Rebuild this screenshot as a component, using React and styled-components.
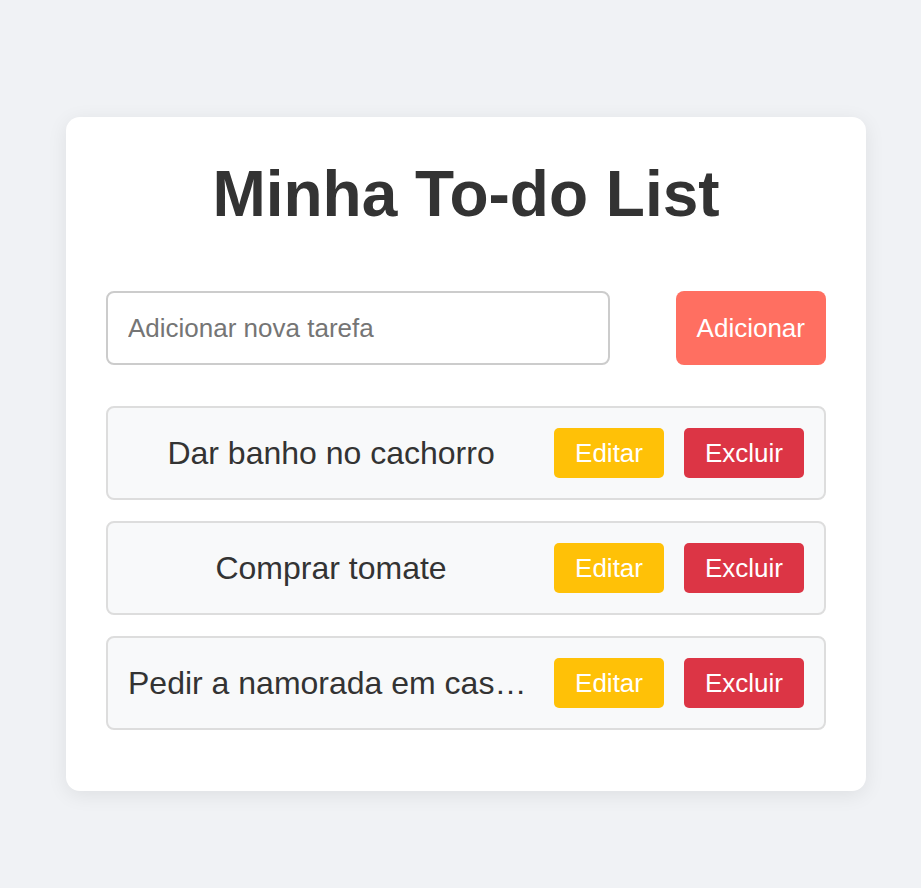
import styled, { createGlobalStyle } from "styled-components"
import { useState } from "react"

const GlobalStyle = createGlobalStyle`
    html, body {
        margin: 0;
        padding: 0;
        background: #f0f2f5;
        font-family: "Liberation Sans", Arial, sans-serif;
    }
`

const initialTasks = [
    "Dar banho no cachorro",
    "Comprar tomate",
    "Pedir a namorada em casamento",
]

const App = () => {

    const [tasks, setTasks] = useState(initialTasks)
    const [text, setText] = useState("")

    const addTask = (e) => {
        e.preventDefault()
        if (!text.trim()) return
        setTasks([...tasks, text.trim()])
        setText("")
    }

    return (
        <Page>
            <GlobalStyle />
            <Card>
                <Title>Minha To-do List</Title>

                <Form onSubmit={ addTask }>
                    <Input
                        placeholder="Adicionar nova tarefa"
                        value={ text }
                        onChange={ (e) => setText(e.target.value) }
                    />
                    <AddButton type="submit">Adicionar</AddButton>
                </Form>

                <TaskList>
                    { tasks.map((task, i) => (
                        <TaskItem key={ i }>
                            <TaskText>{ task }</TaskText>
                            <ActionButton $variant="edit">Editar</ActionButton>
                            <ActionButton $variant="delete" onClick={ () => setTasks(tasks.filter((_, j) => j !== i)) }>
                                Excluir
                            </ActionButton>
                        </TaskItem>
                    )) }
                </TaskList>
            </Card>
        </Page>
    )
}

export default App

const Page = styled.main`
    min-height: 100vh;
    padding: 117px 0 0 66px;
    box-sizing: border-box;
`

const Card = styled.section`
    width: 800px;
    box-sizing: border-box;
    padding: 40px 40px 41px;
    background: #fff;
    border-radius: 14px;
    box-shadow: 0 4px 20px rgba(0, 0, 0, 0.08);
`

const Title = styled.h1`
    margin: 0 0 60px;
    text-align: center;
    font-size: 64px;
    line-height: 74px;
    font-weight: 700;
    color: #333;
`

const Form = styled.form`
    display: flex;
    align-items: stretch;
    margin-bottom: 41px;
`

const Input = styled.input`
    width: 70%;
    box-sizing: border-box;
    padding: 20px;
    font-family: inherit;
    font-size: 26px;
    line-height: 30px;
    color: #333;
    border: 2px solid #ccc;
    border-radius: 8px;
    outline: none;

    &::placeholder {
        color: #757575;
    }
`

const AddButton = styled.button`
    margin-left: auto;
    padding: 0 21px;
    font-family: inherit;
    font-size: 26px;
    color: #fff;
    background: #ff6f61;
    border: none;
    border-radius: 8px;
    cursor: pointer;
`

const TaskList = styled.ul`
    list-style: none;
    margin: 0;
    padding: 0;
`

const TaskItem = styled.li`
    display: flex;
    align-items: center;
    gap: 20px;
    height: 94px;
    box-sizing: border-box;
    padding: 20px;
    margin-bottom: 21px;
    background: #f8f9fa;
    border: 2px solid #ddd;
    border-radius: 8px;

    &:last-child {
        margin-bottom: 20px;
    }
`

const TaskText = styled.span`
    flex: 1;
    min-width: 0;
    text-align: center;
    font-size: 32px;
    line-height: 37px;
    color: #333;
    white-space: nowrap;
    overflow: hidden;
    text-overflow: ellipsis;
`

const ActionButton = styled.button`
    padding: 10px 21px;
    font-family: inherit;
    font-size: 26px;
    line-height: 30px;
    color: #fff;
    background: ${ ({ $variant }) => $variant === "edit" ? "#ffc107" : "#dc3545" };
    border: none;
    border-radius: 5px;
    cursor: pointer;
`
